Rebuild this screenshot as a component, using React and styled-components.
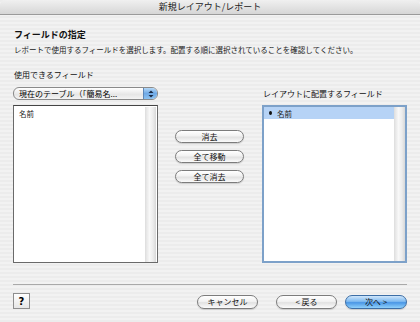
import * as React from "react";
import styled, { createGlobalStyle } from "styled-components";

const GlobalStyle = createGlobalStyle`
  html, body {
    margin: 0;
    padding: 0;
  }
  body {
    font-family: "Noto Sans CJK JP", "Noto Sans", sans-serif;
    color: #000;
  }
`;

const App = () => {
  return (
    <Window>
      <GlobalStyle />
      <TitleBar>新規レイアウト/レポート</TitleBar>
      <Body>
        <Heading>フィールドの指定</Heading>
        <Description>
          レポートで使用するフィールドを選択します。配置する順に選択されていることを確認してください。
        </Description>

        <Panels>
          <ColumnHead>
            <Label>使用できるフィールド</Label>
            <Popup>
              <PopupText>現在のテーブル（「簡易名...</PopupText>
              <PopupArrows>
                <svg width="6" height="8" viewBox="0 0 6 8">
                  <path d="M3 0.5 L5.5 3 L0.5 3 Z" />
                  <path d="M3 7.5 L5.5 5 L0.5 5 Z" />
                </svg>
              </PopupArrows>
            </Popup>
          </ColumnHead>
          <div />
          <ColumnHead $end>
            <Label>レイアウトに配置するフィールド</Label>
          </ColumnHead>

          <FieldList>
            <ListItems>
              <ListRow>名前</ListRow>
            </ListItems>
            <ScrollTrack />
          </FieldList>

          <MoveButtons>
            <PillButton>消去</PillButton>
            <PillButton>全て移動</PillButton>
            <PillButton>全て消去</PillButton>
          </MoveButtons>

          <FieldList $focused>
            <ListItems>
              <ListRow $selected>
                <Bullet />
                名前
              </ListRow>
            </ListItems>
            <ScrollTrack />
          </FieldList>
        </Panels>

        <Separator />

        <Footer>
          <HelpButton>?</HelpButton>
          <FooterButtons>
            <PillButton $width={61}>キャンセル</PillButton>
            <PillButton $width={61} $gap={18}>&lt; 戻る</PillButton>
            <PillButton $width={62} $gap={8} $primary>次へ &gt;</PillButton>
          </FooterButtons>
        </Footer>
      </Body>
    </Window>
  );
};

const Window = styled.div`
  width: 420px;
  height: 322px;
  overflow: hidden;
  display: flex;
  flex-direction: column;
  background: repeating-linear-gradient(
    to bottom,
    #ececec 0px,
    #ececec 2px,
    #f2f2f2 2px,
    #f2f2f2 4px
  );
`;

const TitleBar = styled.div`
  height: 14px;
  flex: none;
  display: flex;
  align-items: center;
  justify-content: center;
  font-size: 9px;
  line-height: 14px;
  color: #222;
  background: linear-gradient(to bottom, #f0f0f0, #d6d6d6);
  border-bottom: 1px solid #9a9a9a;
  border-radius: 5px 5px 0 0;
`;

const Body = styled.div`
  padding: 14px 13px 0 13px;
  display: flex;
  flex-direction: column;
`;

const Heading = styled.div`
  font-size: 9px;
  font-weight: bold;
  line-height: 12px;
  height: 12px;
  margin-left: 1px;
  color: #111;
`;

const Description = styled.div`
  margin-top: 4px;
  margin-left: 1px;
  font-size: 7.5px;
  line-height: 10px;
  height: 10px;
  white-space: nowrap;
  color: #222;
`;

const Panels = styled.div`
  margin-top: 15px;
  display: grid;
  grid-template-columns: 145px 1fr 145px;
  grid-template-rows: auto 158px;
`;

const ColumnHead = styled.div`
  display: flex;
  flex-direction: column;
  justify-content: ${(p) => (p.$end ? "flex-end" : "flex-start")};
  padding-bottom: ${(p) => (p.$end ? "6px" : "5px")};
`;

const Label = styled.div`
  font-size: 8px;
  line-height: 10px;
  height: 10px;
  color: #111;
  margin-left: 1px;
  white-space: nowrap;
`;

const Popup = styled.div`
  margin-top: 7px;
  height: 13px;
  box-sizing: border-box;
  display: flex;
  align-items: stretch;
  border: 1px solid #8a8a8a;
  border-radius: 6px;
  overflow: hidden;
  background: linear-gradient(to bottom, #ffffff, #e6e6e6 60%, #f4f4f4);
`;

const PopupText = styled.div`
  flex: 1;
  font-size: 8px;
  line-height: 11px;
  padding-left: 5px;
  white-space: nowrap;
  overflow: hidden;
`;

const PopupArrows = styled.div`
  width: 13px;
  display: flex;
  align-items: center;
  justify-content: center;
  border-left: 1px solid #5d87b8;
  background: linear-gradient(to bottom, #b4d8f7, #6fa9e6 50%, #8cc2f0);

  svg path {
    fill: #1a2a44;
  }
`;

const FieldList = styled.div`
  display: flex;
  box-sizing: border-box;
  background: #fff;
  border: ${(p) => (p.$focused ? "2px solid #7da1c9" : "1px solid #6a6a6a")};
  border-top-color: ${(p) => (p.$focused ? "#7da1c9" : "#444")};
  padding: ${(p) => (p.$focused ? "0" : "1px 1px 0 0")};
`;

const ListItems = styled.div`
  flex: 1;
  min-width: 0;
`;

const ListRow = styled.div`
  height: 12px;
  display: flex;
  align-items: center;
  gap: 5px;
  font-size: 7.5px;
  padding-left: 5px;
  background: ${(p) => (p.$selected ? "#b6d3f6" : "transparent")};
  color: #222;
`;

const Bullet = styled.span`
  width: 3px;
  height: 4px;
  border-radius: 50%;
  background: #111;
`;

const ScrollTrack = styled.div`
  width: 10px;
  flex: none;
  background: linear-gradient(to right, #e4e4e4, #f8f8f8 35%, #ececec 70%, #d8d8d8);
  border-left: 1px solid #e0e0e0;
`;

const MoveButtons = styled.div`
  display: flex;
  flex-direction: column;
  align-items: center;
  gap: 7px;
  padding-top: 25px;
  padding-right: 1px;
`;

const PillButton = styled.button`
  width: ${(p) => p.$width || 69}px;
  height: ${(p) => (p.$width ? 14 : 13)}px;
  margin-left: ${(p) => p.$gap || 0}px;
  padding: 0;
  box-sizing: border-box;
  font-family: "Noto Sans CJK JP", "Noto Sans", sans-serif;
  font-size: 8px;
  line-height: 1;
  color: #111;
  border-radius: 7px;
  border: 1px solid ${(p) => (p.$primary ? "#3c6ea6" : "#7c7c7c")};
  background: ${(p) =>
    p.$primary
      ? "linear-gradient(to bottom, #cfe6fb 0%, #7fbaf0 45%, #4b97e6 55%, #8fd0fb 100%)"
      : "linear-gradient(to bottom, #ffffff 0%, #f2f2f2 45%, #e2e2e2 55%, #fbfbfb 100%)"};
  box-shadow: 0 1px 1px rgba(0, 0, 0, 0.15);
  display: flex;
  align-items: center;
  justify-content: center;
`;

const Separator = styled.div`
  margin-top: 21px;
  height: 1px;
  background: #a9a9a9;
`;

const Footer = styled.div`
  margin-top: 8px;
  display: flex;
  align-items: flex-start;
  justify-content: space-between;
`;

const HelpButton = styled.div`
  width: 17px;
  height: 16px;
  box-sizing: border-box;
  border: 1px solid #8e8e8e;
  background: linear-gradient(to bottom, #ffffff, #e6e6e6);
  display: flex;
  align-items: center;
  justify-content: center;
  font-family: "DejaVu Sans", sans-serif;
  font-weight: bold;
  font-size: 10px;
  color: #000;
`;

const FooterButtons = styled.div`
  display: flex;
  margin-top: 2px;
`;

export default App;
